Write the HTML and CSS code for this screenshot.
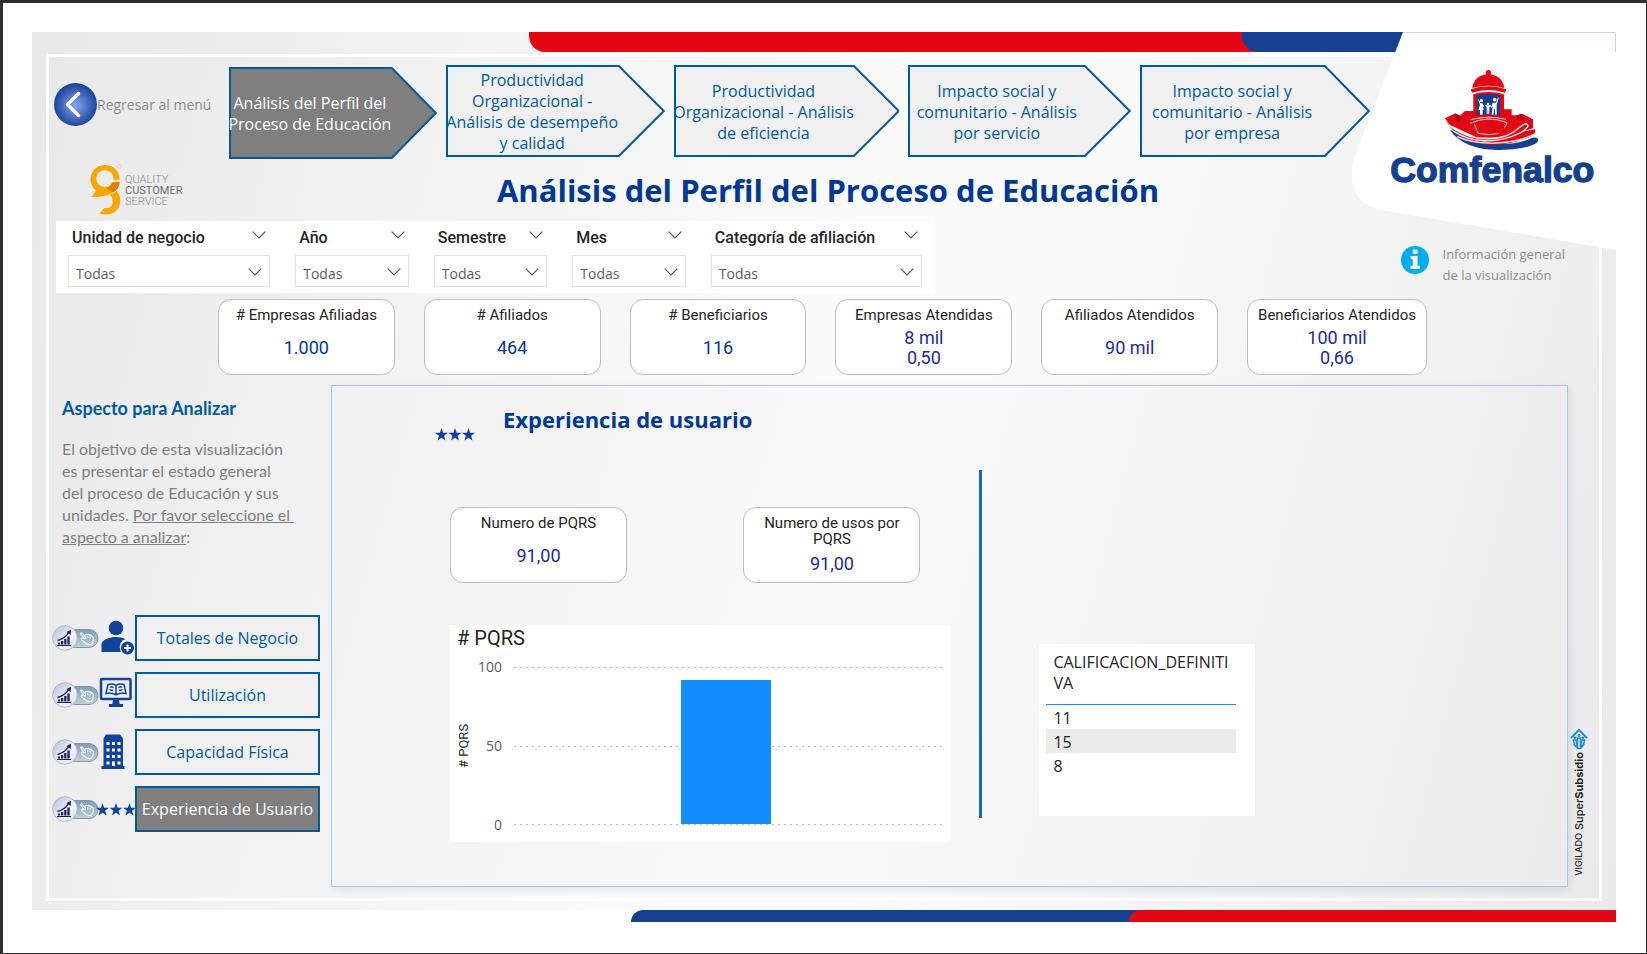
FILE: index.html
```html
<!DOCTYPE html>
<html lang="es">
<head>
<meta charset="utf-8">
<title>Análisis del Perfil del Proceso de Educación</title>
<link rel="stylesheet" href="styles.css">
</head>
<body>
<svg class="defs" width="0" height="0" aria-hidden="true">
  <defs>
    <radialGradient id="gBack" cx="50%" cy="52%" r="52%"><stop offset="0" stop-color="#86a6f6"/><stop offset=".55" stop-color="#4a6cc4"/><stop offset="1" stop-color="#17418f"/></radialGradient>
    <linearGradient id="gPill" x1="0" y1="0" x2="0" y2="1"><stop offset="0" stop-color="#7f9bb5"/><stop offset="1" stop-color="#c3d2da"/></linearGradient>
    <linearGradient id="gKnob" x1="0" y1="0" x2="1" y2="1"><stop offset="0" stop-color="#b3bddb"/><stop offset=".6" stop-color="#f1f3fb"/><stop offset="1" stop-color="#d5daea"/></linearGradient>
    <symbol id="chev" viewBox="0 0 14 8"><path d="M.7.7 7 7 13.3.7" fill="none" stroke="#555" stroke-width="1.2"/></symbol>
    <symbol id="star3" viewBox="0 0 40 13">
      <g fill="#10439a"><path id="st" d="M6.500 0 8.100 4.700 13 4.800 9.100 7.800 10.500 12.600 6.500 9.800 2.500 12.600 3.900 7.800 0 4.800 4.900 4.700Z"/><use href="#st" x="13.500"/><use href="#st" x="27"/></g>
    </symbol>
    <symbol id="toggle" viewBox="0 0 47 26">
      <rect x="14" y="4.500" width="32" height="18" rx="9" fill="url(#gPill)" stroke="#8195ab"/>
      <path d="M28.500 8.500c1-1.200 2-.3 2.300.4l2.300 2.800c-.3-2 .6-2.600 1.900-1.800.8-1 1.900-.7 2.300.3 1-.6 2-.1 2.200.9 1.600 0 2 1.500 1.800 3.300 0 2.600-1.500 5.300-4.300 5.300-2.600 0-3.600-1.500-4.600-2.600l-3-2.300c-.7-1.200.6-1.900 1.600-1.500l1.600.8zM33.500 12v2.300M35.800 11v2.300M38.200 11.500v2" fill="none" stroke="#f4fafc" stroke-width="1.100"/>
      <circle cx="13" cy="13" r="12.300" fill="url(#gKnob)" stroke="#a9aebb" stroke-width=".8"/>
      <path d="M6 17.500h2v2H6zM9 16h2.300v3.500H9zM12.200 14h2.300v5.500h-2.300zM15.400 11.500h2.300v8h-2.300zM5 20h14v1H5z" fill="#1f1f5c"/>
      <path d="M5.500 15.500C9.500 14.500 14 11.500 16.500 7.800" fill="none" stroke="#1f1f5c" stroke-width="1.300"/><path d="m14.500 7 4.500-2.300-.3 5.200z" fill="#1f1f5c"/>
    </symbol>
  </defs>
</svg>
<div class="page">
<div class="canvas">
  <div class="bar bar-top"><span class="seg-red"></span><span class="seg-blue"></span></div>
  <div class="frame">
    <header class="head">
      <a class="back" href="#">
        <svg width="43" height="43" viewBox="0 0 43 43" aria-hidden="true"><circle cx="21.500" cy="21.500" r="21.500" fill="url(#gBack)"/><path d="M24.500 10.500 13.500 21.500l11 11" fill="none" stroke="#fff" stroke-width="3.500" stroke-linecap="round" stroke-linejoin="round"/></svg>
        <span>Regresar al menú</span>
      </a>
      <nav class="steps">
        <button class="step on"><svg viewBox="0 0 208 91" preserveAspectRatio="none" aria-hidden="true"><path d="M1 1H163L207 45.500 163 90H1Z"/></svg><span>Análisis del Perfil del<br>Proceso de Educación</span></button>
        <button class="step"><svg viewBox="0 0 219 92" preserveAspectRatio="none" aria-hidden="true"><path d="M1 1H173L218 46 173 91H1Z"/></svg><span>Productividad<br>Organizacional -<br>Análisis de desempeño<br>y calidad</span></button>
        <button class="step"><svg viewBox="0 0 226 92" preserveAspectRatio="none" aria-hidden="true"><path d="M1 1H180L225 46 180 91H1Z"/></svg><span>Productividad<br>Organizacional - Análisis<br>de eficiencia</span></button>
        <button class="step"><svg viewBox="0 0 223 92" preserveAspectRatio="none" aria-hidden="true"><path d="M1 1H177L222 46 177 91H1Z"/></svg><span>Impacto social y<br>comunitario - Análisis<br>por servicio</span></button>
        <button class="step"><svg viewBox="0 0 230 91" preserveAspectRatio="none" aria-hidden="true"><path d="M1 1H185L229 45.500 185 90H1Z"/></svg><span>Impacto social y<br>comunitario - Análisis<br>por empresa</span></button>
      </nav>
    </header>

    <div class="titles">
      <svg class="qcs" width="96" height="56" viewBox="88 162 96 56" role="img" aria-label="Quality Customer Service">
        <path fill-rule="evenodd" d="M119.600 178.500A14.600 14.300 0 1 0 96 190.500Q94.500 194 91 197C106 198 119.600 192 119.600 182ZM113.500 178.500A8.600 8.600 0 1 1 96.300 178.500 8.600 8.600 0 1 1 113.500 178.500Z" fill="#f5a800"/>
        <path d="M119.600 182.500H112.500Q110 187 106 188.500L113 192.500Q119 189 119.600 182.500Z" fill="#e07f00"/>
        <path d="M111.500 180.700H121" stroke="#f2f2f3" stroke-width="1.800"/>
        <path d="M109.500 194.800Q114 194 116.500 191C120 194 120.500 199 120.200 202 119.500 211 111 217 99.500 213.500L104.500 208C110 209 112.500 205.500 112.800 202Q113 197 109.500 194.800Z" fill="#f5a800"/>
        <circle cx="119.500" cy="166.500" r="2" fill="none" stroke="#f0c978" stroke-width=".8"/>
        <g font-family="Roboto" font-size="11" font-weight="300"><text x="125" y="183" fill="#8a8a8a">QUALITY</text><text x="125" y="194" fill="#6e6e6e" font-weight="400">CUSTOMER</text><text x="125" y="205" fill="#8a8a8a">SERVICE</text></g>
      </svg>
      <h1>Análisis del Perfil del Proceso de Educación</h1>
    </div>

    <div class="filters-row">
      <div class="filters">
        <div class="filter f1"><div class="fh"><label for="f1">Unidad de negocio</label><button aria-label="Opciones"><svg width="14" height="8"><use href="#chev"/></svg></button></div><div class="sel"><select id="f1"><option>Todas</option></select><svg width="14" height="8"><use href="#chev"/></svg></div></div>
        <div class="filter f2"><div class="fh"><label for="f2">Año</label><button aria-label="Opciones"><svg width="14" height="8"><use href="#chev"/></svg></button></div><div class="sel"><select id="f2"><option>Todas</option></select><svg width="14" height="8"><use href="#chev"/></svg></div></div>
        <div class="filter f3"><div class="fh"><label for="f3">Semestre</label><button aria-label="Opciones"><svg width="14" height="8"><use href="#chev"/></svg></button></div><div class="sel"><select id="f3"><option>Todas</option></select><svg width="14" height="8"><use href="#chev"/></svg></div></div>
        <div class="filter f4"><div class="fh"><label for="f4">Mes</label><button aria-label="Opciones"><svg width="14" height="8"><use href="#chev"/></svg></button></div><div class="sel"><select id="f4"><option>Todas</option></select><svg width="14" height="8"><use href="#chev"/></svg></div></div>
        <div class="filter f5"><div class="fh"><label for="f5">Categoría de afiliación</label><button aria-label="Opciones"><svg width="14" height="8"><use href="#chev"/></svg></button></div><div class="sel"><select id="f5"><option>Todas</option></select><svg width="14" height="8"><use href="#chev"/></svg></div></div>
      </div>
      <div class="info">
        <svg width="28" height="28" viewBox="0 0 28 28" aria-hidden="true"><circle cx="14" cy="14" r="14" fill="#00aeef"/><path d="M11.800 3.500h4.700v4.300h-4.700zM9.800 10h6.700v9.800h2.200v3.200H9.500v-3.200h2.300v-6.600h-2z" fill="#fff"/></svg>
        <p>Información general<br>de la visualización</p>
      </div>
    </div>

    <section class="kpis">
      <div class="card"><h2>#&nbsp;Empresas Afiliadas</h2><p class="navy">1.000</p></div>
      <div class="card"><h2># Afiliados</h2><p class="navy">464</p></div>
      <div class="card"><h2># Beneficiarios</h2><p class="navy">116</p></div>
      <div class="card"><h2>Empresas Atendidas</h2><p>8 mil<br>0,50</p></div>
      <div class="card"><h2>Afiliados Atendidos</h2><p>90 mil</p></div>
      <div class="card"><h2>Beneficiarios Atendidos</h2><p>100 mil<br>0,66</p></div>
    </section>

    <main class="main">
      <aside class="side">
        <h2>Aspecto para Analizar</h2>
        <p>El objetivo de esta visualización<br>es presentar el estado general<br>del proceso de Educación y sus<br>unidades. <u>Por favor seleccione el&nbsp;</u><br><u>aspecto a analizar</u>:</p>
        <div class="menu">
          <div class="item"><svg class="tg" width="47" height="26"><use href="#toggle"/></svg>
            <svg class="ic" width="36" height="36" viewBox="0 0 36 36" aria-hidden="true"><g fill="#10439a"><circle cx="17" cy="8" r="7.300"/><path d="M2.500 32V24C4 19 11 17 17 17c4 0 7 .7 9.500 2a8 8 0 0 0-5 11v2z"/><circle cx="28.500" cy="28" r="6.500"/></g><path d="M28.500 24.500v7M25 28h7" stroke="#fff" stroke-width="2"/></svg>
            <button>Totales de Negocio</button></div>
          <div class="item"><svg class="tg" width="47" height="26"><use href="#toggle"/></svg>
            <svg class="ic" width="36" height="36" viewBox="0 0 36 36" aria-hidden="true"><rect x="2" y="2" width="29.500" height="20" rx="1" fill="none" stroke="#10439a" stroke-width="2.500"/><path d="M14 23h6l.7 4H24v3H10v-3h3.300z" fill="#10439a"/><path d="M9 7.500q4-1.500 8 .8 4-2.300 8-.8l2 9q-5-1.200-10 1.200-5-2.400-10-1.200zM17 8.300v9M11 10q2-.4 3.500.5M10.500 13q2-.4 3.500.5M23 10q-2-.4-3.500.5M23.500 13q-2-.4-3.500.5" fill="none" stroke="#10439a" stroke-width="1.500"/></svg>
            <button>Utilización</button></div>
          <div class="item"><svg class="tg" width="47" height="26"><use href="#toggle"/></svg>
            <svg class="ic" width="36" height="36" viewBox="0 0 36 36" aria-hidden="true"><path d="M7 .5h14l3 4V32h1.500v3h-23V32H4.500V4.500z" fill="#10439a"/><path d="M7.500 8h3v3h-3zM13 8h3v3h-3zM18.500 8h3v3h-3zM7.500 14.500h3v3h-3zM13 14.500h3v3h-3zM18.500 14.500h3v3h-3zM7.500 21h3v3h-3zM13 21h3v3h-3zM18.500 21h3v3h-3zM7.500 27.500h3v3h-3zM18.500 27.500h3v3h-3zM13 27.500h3V32h-3z" fill="#fff"/></svg>
            <button>Capacidad Física</button></div>
          <div class="item"><svg class="tg" width="47" height="26"><use href="#toggle"/></svg>
            <svg class="ic stars" width="40" height="13"><use href="#star3"/></svg>
            <button class="on">Experiencia de Usuario</button></div>
        </div>
      </aside>

      <section class="panel">
        <div class="phead"><svg width="40" height="13"><use href="#star3"/></svg><h2>Experiencia de usuario</h2></div>
        <div class="pbody">
          <div class="left">
            <div class="pair">
              <div class="card"><h2>Numero de PQRS</h2><p>91,00</p></div>
              <div class="card"><h2>Numero de usos por PQRS</h2><p>91,00</p></div>
            </div>
            <figure class="chart">
              <figcaption># PQRS</figcaption>
              <div class="plotrow">
                <span class="ytitle"># PQRS</span>
                <div class="ticks"><span>100</span><span>50</span><span>0</span></div>
                <div class="plot"><i></i><i></i><i></i><b class="col" style="height:91%"></b></div>
              </div>
            </figure>
          </div>
          <div class="rule"></div>
          <div class="right">
            <div class="tbl"><table><thead><tr><th>CALIFICACION_DEFINITI<br>VA</th></tr></thead><tbody><tr><td>11</td></tr><tr><td>15</td></tr><tr><td>8</td></tr></tbody></table></div>
          </div>
        </div>
      </section>

      <div class="seal">
        <svg width="18" height="22" viewBox="0 0 18 22" aria-hidden="true"><path d="M1 10 9 2l8 8" fill="none" stroke="#2590cc" stroke-width="2"/><path d="M3.500 12h3v7l-2-2zM7.500 10h3v10.500h-3zM11.500 12h3l-1 5-2 2z" fill="none" stroke="#2590cc" stroke-width="1.600"/><circle cx="5" cy="9.800" r="1.400" fill="#2590cc"/><circle cx="9" cy="7.500" r="1.500" fill="#2590cc"/><circle cx="13" cy="9.800" r="1.400" fill="#2590cc"/></svg>
        <span><small>VIGILADO</small> Super<strong>Subsidio</strong></span>
      </div>
    </main>
  </div>
  <div class="bar bar-bottom"><span class="seg-blue"></span><span class="seg-red"></span></div>

  <svg class="brand" width="265" height="220" viewBox="0 0 265 220" role="img" aria-label="Comfenalco">
    <path d="M52 0 6 118C-4 145-2 173 36 179L265 218V0Z" fill="#fff"/>
    <path d="M52 .5H264.500V20" fill="none" stroke="#cdd3ea"/>
    <g transform="translate(19 18) scale(.3333)">
      <path d="M238 238C270 285 330 300 380 300 440 300 490 290 503 275 508 262 495 260 480 266 420 292 310 290 238 238Z" fill="#15408f"/>
      <g fill="#e30613">
        <circle cx="355" cy="68" r="8"/><path d="M307 114C310 88 330 73 355 73S400 88 403 114Q355 100 307 114Z"/>
        <path d="M302 118Q355 100 409 118L405 128Q355 112 306 128Z"/>
        <path d="M310 131Q355 118 402 131V178H425V196H440L456 191 489 208V235L400 262H320L240 225 225 205 256 190 270 197 285 183H310Z"/>
        <path d="M225 205C245 245 300 268 370 262 420 257 440 220 466 219 480 222 473 235 455 245L495 238C500 255 480 262 465 266 400 292 320 292 265 255Q238 235 225 205Z"/>
      </g>
      <path d="M320 136Q355 128 390 136V197Q355 190 320 197Z" fill="#15408f"/>
      <g fill="none" stroke="#fff" stroke-width="2.500"><path d="M303 133Q355 116 407 133M300 220Q355 195 411 218L403 235M313 222 324 250Q355 258 388 250M302 209Q355 195 408 208"/><path d="M236 225C290 270 360 275 410 257 445 243 455 222 467 221 482 225 468 240 450 249 380 284 300 278 250 243" stroke-width="4"/><path d="M262 260C330 292 440 280 494 252" stroke-width="4"/></g>
      <path d="M256 191 270 198V216L252 209ZM440 197 456 192 462 214 442 207Z" fill="#b0040f"/>
      <g fill="#fff"><circle cx="334" cy="152" r="5"/><path d="M323 145 332 160H337L344 172 338 168 341 180H338V194H330V180H325L330 165Z"/><circle cx="354" cy="162" r="4"/><path d="M345 166H363V169L358 172V192H355V182H353V192H350V172Z"/><circle cx="374" cy="149" r="5.500"/><path d="M384 142 386 144 380 164V194H375V176H373L370 194H365L368 170 362 175 368 158H378Z"/></g>
      <text x="61" y="397" font-family="'Liberation Sans'" font-weight="700" font-size="107" fill="#15408f" stroke="#15408f" stroke-width="4">Comfenalco</text>
    </g>
  </svg>
</div>
</div>
</body>
</html>
```
FILE: styles.css
```css
* { box-sizing: border-box; }
body { margin: 0; font-family: "Open Sans", "Noto Sans", sans-serif; font-size: 16px; color: #252423; background: #fff; }
h1, h2, p, figure { margin: 0; }
button { font: inherit; padding: 0; cursor: pointer; background: none; border: 0; }
.defs { position: absolute; }
.page { min-height: 100vh; border: solid #2f2f2f; border-width: 3px 1px 1px 3px; padding: 29px 30px 31px 29px; display: flex; }
.canvas { position: relative; flex: 1; display: flex; flex-direction: column; background: linear-gradient(105deg, #e8e8ea 0%, #f3f3f4 25%, #fbfbfc 48%, #fbfbfc 58%, #f1f1f2 82%, #e9e9eb 100%); }
.bar { display: grid; }
.bar-top { height: 20px; grid-template-columns: 713fr 374fr; padding-left: 31.4%; background: linear-gradient(90deg, transparent 60%, #e30613 60%, #e30613 80%, transparent 80%); }
.bar-top .seg-red { background: #e30613; border-bottom-left-radius: 16px; }
.bar-top .seg-blue { background: #15408f; border-bottom-left-radius: 16px; }
.bar-bottom { height: 12px; grid-template-columns: 499fr 487fr; padding-left: 37.8%; background: linear-gradient(90deg, #fff 60%, #15408f 60%, #15408f 75%, #fff 75%); }
.bar-bottom .seg-blue { background: #15408f; border-top-left-radius: 14px; }
.bar-bottom .seg-red { background: #e30613; border-top-left-radius: 12px; }
.frame { flex: 1; margin: 2px 14px 9px; border: 3px solid #fff; display: flex; flex-direction: column; }

.head { display: grid; grid-template-columns: 180fr 1141fr 229fr; padding-top: 6px; }
.back { display: flex; align-items: center; align-self: center; margin: 0 0 14px 5px; color: #8c8c8c; font-size: 14px; text-decoration: none; white-space: nowrap; }
.steps { display: grid; grid-template-columns: 208fr 219fr 226fr 223fr 230fr; gap: 9px; align-items: center; }
.step { position: relative; min-width: 0; height: 92px; padding: 2px 46px 0 0; color: #005aa0; line-height: 21px; white-space: nowrap; display: flex; align-items: center; justify-content: center; text-align: center; font-size: 16px; }
.step svg { position: absolute; inset: 0; width: 100%; height: 100%; }
.step path { fill: #f0f0f0; stroke: #005aa0; stroke-width: 2; vector-effect: non-scaling-stroke; }
.step span { position: relative; }
.step.on { color: #fff; margin-top: 4px; }
.step.on path { fill: #7f7f7f; }

.titles { display: grid; grid-template-columns: 1fr auto 1fr; height: 62px; align-items: center; padding-left: 8px; }
.qcs { margin-left: 31px; }
h1 { font-size: 31px; line-height: 40px; font-weight: 700; color: #003896; white-space: nowrap; }

.filters-row { display: flex; justify-content: space-between; margin: 0 34px 0 7px; }
.filters { background: #fff; display: flex; flex: 0 1 878px; height: 72px; gap: 25px; padding: 5px 12px 0; }
.filter { min-width: 0; }
.f1 { flex: 203 1 0; } .f2, .f3, .f4 { flex: 114 1 0; } .f5 { flex: 212 1 0; }
.fh { display: flex; justify-content: space-between; height: 29px; padding: 0 4px; font: 500 16px/24px Roboto, sans-serif; white-space: nowrap; }
.fh button { height: 18px; display: flex; align-items: center; }
.sel { position: relative; }
.sel select { appearance: none; width: 100%; height: 32px; border: 1px solid #e3e3e3; background: #fff; padding: 4px 7px 0; font: 14px "Open Sans", sans-serif; color: #605e5c; border-radius: 0; }
.sel svg { position: absolute; right: 8px; top: 13px; pointer-events: none; }
.info { display: flex; gap: 14px; padding-top: 23px; color: #8c8c8c; font-size: 13px; line-height: 21px; }
.info svg { margin-top: 2px; }

.kpis { display: grid; grid-template-columns: 177fr 177fr 177fr 177fr 177fr 180fr; gap: 29px; margin: 6px 11.1% 10px 10.9%; }
.card { height: 76px; background: #fff; border: 1px solid #bdbdbd; border-radius: 13px; display: flex; flex-direction: column; text-align: center; font-family: Roboto, sans-serif; padding: 7px 6px 1px; }
.card h2 { font-size: 15px; line-height: 16px; font-weight: 400; }
.card p { flex: 1; display: flex; flex-direction: column; justify-content: center; font-size: 18px; line-height: 20px; color: #1a2ba3; }
.card p.navy { color: #003896; }

.main { flex: 1; display: grid; grid-template-columns: 282fr 1237fr 31fr; padding-bottom: 11px; }
.side { padding: 9px 11px 0 3px; display: flex; flex-direction: column; }
.side h2 { margin-left: 10px; font: 700 18px/28px Lato, sans-serif; color: #005aa0; }
.side p { margin: 16px 0 0 10px; font: 16px/22px Lato, sans-serif; color: #7f7f7f; white-space: nowrap; }
.menu { display: flex; flex-direction: column; gap: 11px; margin-top: 67px; }
.item { display: grid; grid-template-columns: 47px 36px 1fr; align-items: center; height: 46px; }
.item .stars { margin-left: -3px; }
.item button { height: 46px; border: 2px solid #005aa0; background: #f0f0f0; color: #005aa0; font-size: 16px; white-space: nowrap; }
.item button.on { background: #7f7f7f; color: #fff; }

.panel { border: 1px solid #a9c8e4; box-shadow: 2px 3px 8px rgba(0,0,0,.08); display: flex; flex-direction: column; background: rgba(240,240,240,.25); }
.phead { display: flex; align-items: flex-end; gap: 28px; padding: 0 0 0 103px; height: 55px; }
.phead h2 { font-size: 22px; line-height: 30px; font-weight: 700; color: #003896; padding-bottom: 7px; }
.pbody { display: grid; grid-template-columns: 649fr 3px 586fr; flex: 1; padding-top: 29px; }
.left { padding: 37px 28px 0 118px; }
.pair { display: flex; justify-content: space-between; padding-right: 31px; }
.pair .card { width: 177px; }
.pair .card h2 { padding: 0 12px; }
.chart { background: #fff; margin-top: 42px; height: 217px; padding: 2px 9px 0 7px; }
.chart figcaption { font: 20px/22px Roboto, sans-serif; }
.plotrow { display: flex; margin-top: 18px; height: 158px; }
.ytitle { writing-mode: vertical-rl; transform: rotate(180deg); font: 13px/14px Roboto, sans-serif; text-align: center; }
.ticks { width: 31px; margin: -10px 0; display: flex; flex-direction: column; justify-content: space-between; text-align: right; font-size: 14px; line-height: 20px; color: #605e5c; }
.plot { flex: 1; margin-left: 12px; display: flex; flex-direction: column; justify-content: space-between; position: relative; }
.plot i { height: 1px; background: repeating-linear-gradient(90deg, #bbb 0 2px, transparent 2px 6px); }
.col { position: absolute; bottom: 1px; left: 39%; width: 21%; background: #118dff; }
.rule { background: #0f6cc4; margin-bottom: 68px; }
.right { padding: 174px 0 0 57px; }
.tbl { background: #fff; width: 216px; height: 172px; padding: 8px 19px 0 7px; }
table { width: 100%; border-collapse: collapse; }
th, td { text-align: left; font-weight: 400; padding: 0 7px; line-height: 21px; font-size: 16px; white-space: nowrap; }
th { padding-bottom: 10px; border-bottom: 1px solid #118dff; }
td { height: 24px; padding-top: 3px; }
tr:nth-child(2) td { background: #eaeaea; }
.seal { display: flex; flex-direction: column; align-items: center; justify-content: flex-end; padding: 0 10px 11px 0; gap: 2px; }
.seal span { writing-mode: vertical-rl; transform: rotate(180deg); font: 500 11px/14px Inter, sans-serif; white-space: nowrap; }
.seal small { font-size: 9px; }

.brand { position: absolute; top: 0; right: 0; }
```
